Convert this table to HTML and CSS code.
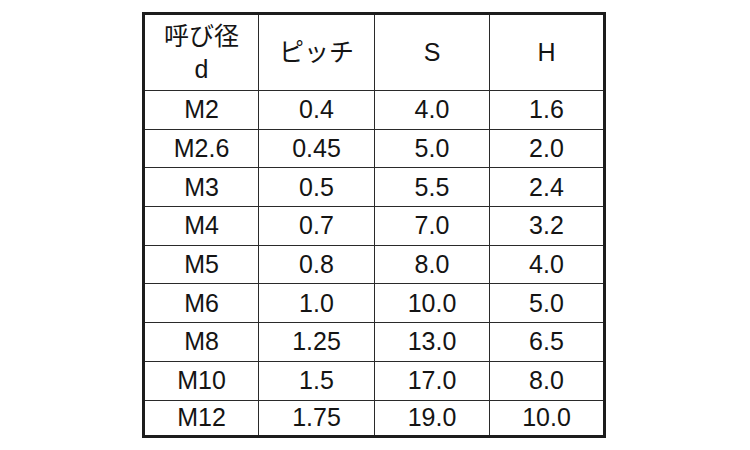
FILE: index.html
```html
<!DOCTYPE html>
<html lang="ja">
<head>
<meta charset="utf-8">
<link rel="stylesheet" href="styles.css">
</head>
<body>
<div class="page">
  <div class="table">
    <div class="cell head"><span>呼び径</span><span>d</span></div>
    <div class="cell head"><span>ピッチ</span></div>
    <div class="cell head"><span>S</span></div>
    <div class="cell head"><span>H</span></div>

    <div class="cell">M2</div><div class="cell">0.4</div><div class="cell">4.0</div><div class="cell">1.6</div>
    <div class="cell">M2.6</div><div class="cell">0.45</div><div class="cell">5.0</div><div class="cell">2.0</div>
    <div class="cell">M3</div><div class="cell">0.5</div><div class="cell">5.5</div><div class="cell">2.4</div>
    <div class="cell">M4</div><div class="cell">0.7</div><div class="cell">7.0</div><div class="cell">3.2</div>
    <div class="cell">M5</div><div class="cell">0.8</div><div class="cell">8.0</div><div class="cell">4.0</div>
    <div class="cell">M6</div><div class="cell">1.0</div><div class="cell">10.0</div><div class="cell">5.0</div>
    <div class="cell">M8</div><div class="cell">1.25</div><div class="cell">13.0</div><div class="cell">6.5</div>
    <div class="cell">M10</div><div class="cell">1.5</div><div class="cell">17.0</div><div class="cell">8.0</div>
    <div class="cell">M12</div><div class="cell">1.75</div><div class="cell">19.0</div><div class="cell">10.0</div>
  </div>
</div>
</body>
</html>
```

FILE: styles.css
```css
html, body {
  margin: 0;
  padding: 0;
  background: #ffffff;
}

.page {
  width: 750px;
  height: 450px;
  padding: 12px 0 0 142px;
  box-sizing: border-box;
  font-family: "Liberation Sans", Arial, "Noto Sans CJK JP", sans-serif;
  color: #141414;
}

.table {
  display: grid;
  width: max-content;
  grid-template-columns: 113px 115px 114px 113px;
  grid-template-rows: 75px repeat(8, 37.7px) 34.5px;
  gap: 1px;
  background: #2a2a2a;
  border: 3px solid #1c1c1c;
}

.cell {
  background: #ffffff;
  display: flex;
  align-items: center;
  justify-content: center;
  font-size: 25px;
  line-height: 1;
}

.head {
  flex-direction: column;
  line-height: 33px;
}
```
